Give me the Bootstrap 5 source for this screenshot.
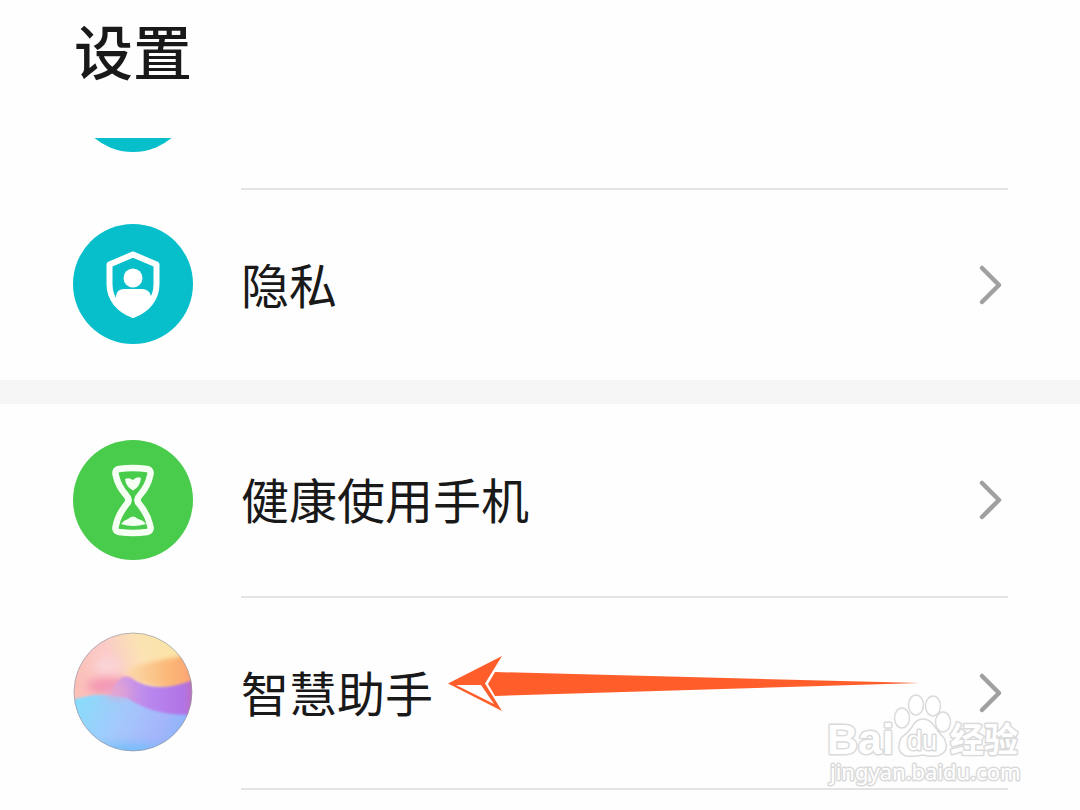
<!DOCTYPE html>
<html lang="zh-CN">
<head>
<meta charset="utf-8">
<meta name="viewport" content="width=device-width, initial-scale=1">
<title>设置</title>
<link rel="stylesheet" href="https://cdn.jsdelivr.net/npm/bootstrap@5.3.0/dist/css/bootstrap.min.css">
<style>
  body { font-family: "Noto Sans CJK SC", sans-serif; background: #fefefe; color: #191919; overflow-x: hidden; }
  .page-head { height: 138px; padding: 8px 72px 0 74px; }
  .page-head h1 { font-size: 59px; line-height: 84px; font-weight: 500; }
  .scrolled-edge { height: 50px; }
  .setting { height: 192px; padding: 0 72px 0 73px; gap: 48px; color: inherit; }
  .setting:hover { color: inherit; }
  .disc { width: 120px; height: 120px; }
  .setting-body { font-size: 48px; line-height: 72px; padding-right: 4px; }
  .ruled { border-top: 2px solid #e3e3e3; }
  .next-row { height: 22px; }
  .section-gap { height: 24px; background: #f6f6f6; }
  .pointer { left: 446px; top: 58px; }
  .watermark { right: 50px; bottom: -2px; pointer-events: none; }
  .mark-text { fill: #fff; stroke: #dadada; stroke-width: 3px; paint-order: stroke; stroke-linejoin: round; }
</style>
</head>
<body>
<header class="page-head"><h1 class="m-0">设置</h1></header>
<main>
  <div class="scrolled-edge d-flex align-items-end overflow-hidden">
    <div class="setting d-flex align-items-center w-100 flex-shrink-0">
      <svg class="disc flex-shrink-0" viewBox="0 0 120 120" aria-hidden="true"><circle cx="60" cy="60" r="60" fill="#06bfca"/></svg>
    </div>
  </div>

  <a href="#privacy" class="setting d-flex align-items-center text-decoration-none">
    <svg class="disc flex-shrink-0" viewBox="0 0 120 120" aria-hidden="true">
      <circle cx="60" cy="60" r="60" fill="#06bfca"/>
      <path d="M60 30.500 L83.500 40.500 V60 C83.500 75 74 85.500 60 91 C46 85.500 36.500 75 36.500 60 V40.500 Z" fill="none" stroke="#fff" stroke-width="6" stroke-linejoin="round"/>
      <circle cx="60" cy="54" r="9.500" fill="#fff"/>
      <path d="M43 78 V72 Q44 65 51 65 H69 Q76 65 78 72 V78 Q70 88 60 92 Q49 88 43 78Z" fill="#fff"/>
    </svg>
    <div class="setting-body ruled d-flex align-items-center justify-content-between flex-grow-1 h-100">
      <span class="pb-1">隐私</span>
      <svg width="26" height="42" viewBox="0 0 26 42" fill="none" stroke="#a0a0a0" stroke-width="4.500" stroke-linecap="round" stroke-linejoin="round" aria-hidden="true"><path d="M4 4 L21 21 L4 38"/></svg>
    </div>
  </a>

  <div class="section-gap"></div>

  <a href="#balance" class="setting d-flex align-items-center text-decoration-none">
    <svg class="disc flex-shrink-0" viewBox="0 0 120 120" aria-hidden="true">
      <circle cx="60" cy="60" r="60" fill="#49cb4c"/>
      <path d="M46 29 Q60 27 74 29 Q79 30 77 36 Q75 46 67 55 Q62 60 67 65 Q75 75 77 85 Q79 91 74 92 Q60 94 46 92 Q41 91 43 85 Q45 75 53 65 Q58 60 53 55 Q45 46 43 36 Q41 30 46 29Z" fill="none" stroke="#f6fff3" stroke-width="6.500"/>
      <path d="M52 39 Q56 37 60 40 Q64 36 68 38 Q67 47 60 50.500 Q53 47 52 39Z M48 84 Q51 80 55 79 Q60 74 65 79 Q70 80 73 84 Q60 88 48 84Z" fill="#f6fff3"/>
    </svg>
    <div class="setting-body d-flex align-items-center justify-content-between flex-grow-1 h-100">
      <span class="pb-1">健康使用手机</span>
      <svg width="26" height="42" viewBox="0 0 26 42" fill="none" stroke="#a0a0a0" stroke-width="4.500" stroke-linecap="round" stroke-linejoin="round" aria-hidden="true"><path d="M4 4 L21 21 L4 38"/></svg>
    </div>
  </a>

  <div class="position-relative">
    <a href="#assistant" class="setting d-flex align-items-center text-decoration-none">
      <svg class="disc flex-shrink-0" viewBox="0 0 120 120" aria-hidden="true">
        <defs>
          <clipPath id="orb"><circle cx="60" cy="60" r="59"/></clipPath>
          <linearGradient id="sky" x1="0" y1=".3" x2="1" y2="0"><stop offset="0" stop-color="#fbc0b8"/><stop offset=".3" stop-color="#fbcbc8"/><stop offset=".55" stop-color="#fbe2b4"/><stop offset="1" stop-color="#fbe69c"/></linearGradient>
          <linearGradient id="dune" x1="0" y1="0" x2="1" y2="0"><stop offset="0" stop-color="#fbdcac"/><stop offset=".6" stop-color="#fbb878"/><stop offset="1" stop-color="#fa9f72"/></linearGradient>
          <linearGradient id="violet" x1="0" y1="0" x2="1" y2="0"><stop offset="0" stop-color="#e0a5dc"/><stop offset=".45" stop-color="#b887ee"/><stop offset=".85" stop-color="#b273e5"/><stop offset="1" stop-color="#c06fae"/></linearGradient>
          <linearGradient id="sea" x1="0" y1=".4" x2="1" y2=".6"><stop offset="0" stop-color="#89dcfb"/><stop offset=".4" stop-color="#a4c8fb"/><stop offset=".7" stop-color="#a6b5fb"/><stop offset="1" stop-color="#7eb6fb"/></linearGradient>
          <filter id="soft" x="-50%" y="-100%" width="200%" height="300%"><feGaussianBlur stdDeviation="5"/></filter>
          <filter id="edge"><feGaussianBlur stdDeviation="1"/></filter>
          <filter id="haze"><feGaussianBlur stdDeviation="2"/></filter>
        </defs>
        <g clip-path="url(#orb)">
          <path d="M0 0H120V120H0Z" fill="url(#sky)"/>
          <ellipse cx="35" cy="34" rx="13" ry="10" fill="#fbd4d7" filter="url(#soft)"/>
          <path d="M52 40 Q70 28 124 23 V55 Q79 62 52 40Z" fill="url(#dune)" filter="url(#haze)"/>
          <ellipse cx="37" cy="54" rx="24" ry="8" fill="#f495b1" filter="url(#soft)"/>
          <path d="M38 62 Q46 40 58 46 Q84 64 124 46 V90 H38Z" fill="url(#violet)" filter="url(#edge)"/>
          <path d="M-4 69 Q26 58 54 66 Q84 86 124 82 V124 H-4Z" fill="url(#sea)" filter="url(#edge)"/>
          <ellipse cx="44" cy="60" rx="13" ry="6" fill="#e6a5cc" opacity=".8" filter="url(#soft)"/>
          <ellipse cx="56" cy="119" rx="38" ry="7" fill="#61bffb" opacity=".7" filter="url(#soft)"/>
        </g>
        <circle cx="60" cy="60" r="59" fill="none" stroke="#9295a5" stroke-opacity=".65"/>
      </svg>
      <div class="setting-body ruled d-flex align-items-center justify-content-between flex-grow-1 h-100">
        <span class="pb-1">智慧助手</span>
        <svg width="26" height="42" viewBox="0 0 26 42" fill="none" stroke="#a0a0a0" stroke-width="4.500" stroke-linecap="round" stroke-linejoin="round" aria-hidden="true"><path d="M4 4 L21 21 L4 38"/></svg>
      </div>
    </a>

    <svg class="pointer position-absolute" width="480" height="64" viewBox="0 0 480 64" aria-hidden="true">
      <path d="M49 18 L474 29 L49 42 L42 30Z" fill="#ff5e2b"/>
      <path d="M2 29.500 L56 2 L39 29.500 L56 57Z" fill="#ff5e2b"/>
      <path d="M10 31 H35 L48 50Z" fill="#fff"/>
    </svg>

    <svg class="watermark position-absolute" width="210" height="100" viewBox="0 0 210 100" role="img" aria-label="Baidu 经验">
      <g fill="#fff" stroke="#dadada" stroke-width="1.500">
        <ellipse cx="82" cy="28" rx="7.500" ry="10"/><ellipse cx="96" cy="15" rx="7.500" ry="10"/>
        <ellipse cx="113" cy="16" rx="7.500" ry="10"/><ellipse cx="123" cy="32" rx="7.500" ry="10"/>
        <path d="M103 29 Q110 29 115 37 Q119 43 124 48 Q131 62 117 66 Q109 67 103 65 Q93 67 86 66 Q75 62 81 48 Q88 43 92 37 Q96 29 103 29Z"/>
      </g>
      <g class="mark-text">
        <text x="7" y="64" font-family="Liberation Sans, sans-serif" font-weight="700" font-size="43">Bai</text>
        <text x="87" y="60" font-family="Liberation Sans, sans-serif" font-weight="400" font-size="27">du</text>
        <text x="130" y="62" font-family="Noto Sans CJK SC, sans-serif" font-weight="700" font-size="34">经验</text>
        <text x="10" y="90" font-family="Noto Sans, sans-serif" font-size="22">jingyan.baidu.com</text>
      </g>
    </svg>
  </div>

  <div class="setting next-row d-flex">
    <div class="disc h-100 flex-shrink-0"></div>
    <div class="ruled flex-grow-1"></div>
  </div>
</main>
<script src="https://cdn.jsdelivr.net/npm/bootstrap@5.3.0/dist/js/bootstrap.bundle.min.js"></script>
</body>
</html>
